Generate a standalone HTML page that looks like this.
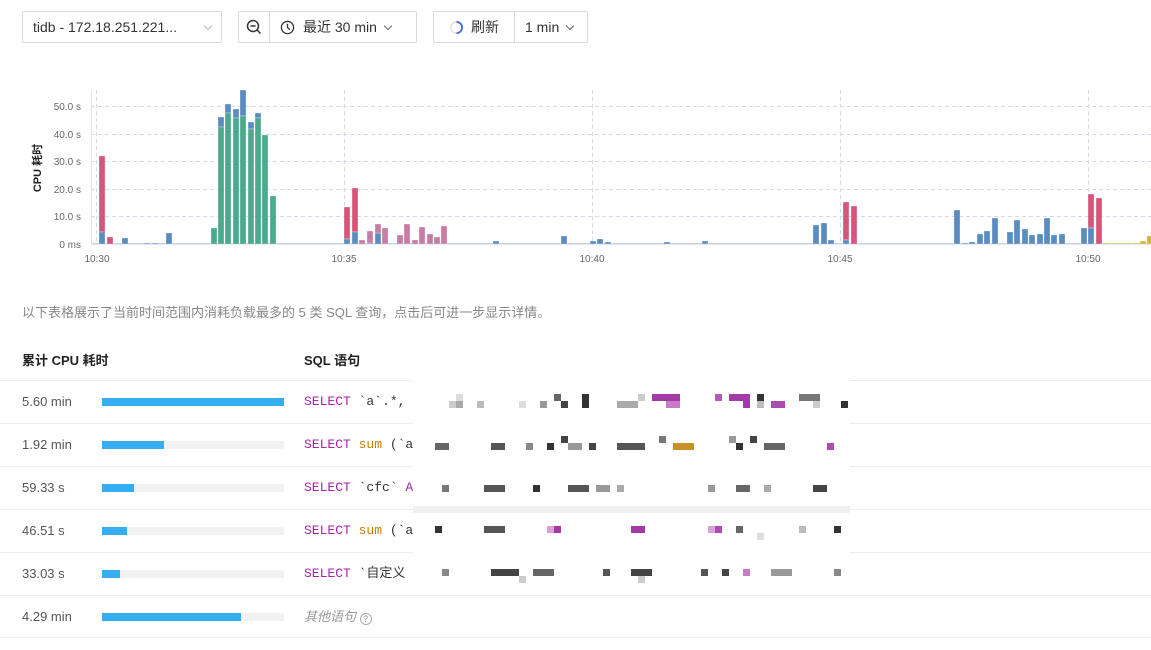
<!DOCTYPE html>
<html><head><meta charset="utf-8"><style>
*{box-sizing:border-box;margin:0;padding:0}
body{width:1151px;height:650px;background:#fff;font-family:"Liberation Sans","Noto Sans CJK SC",sans-serif;color:#333;position:relative;overflow:hidden}
.box{position:absolute;top:11px;height:32px;border:1px solid #d9d9d9;border-radius:2px;font-size:14px;color:#333;display:flex;align-items:center}
.seg{height:100%;display:flex;align-items:center;padding:0 10px}
.chev{width:6px;height:6px;border-right:1px solid #666;border-bottom:1px solid #666;transform:rotate(45deg);margin:-3px 0 0 8px}
.desc{position:absolute;left:22px;top:302px;font-size:13px;color:#888}
.th{position:absolute;top:350px;font-size:13px;color:#222;font-weight:bold}
.row{position:absolute;left:0;width:1151px;height:43px;border-top:1px solid #ececec}
.row .v{position:absolute;left:22px;top:13px;font-size:13px;line-height:16px;color:#555}
.row .bar{position:absolute;left:102px;top:17px;width:182px;height:8px;background:#f2f2f2}
.row .bar i{display:block;height:100%;background:#34aef0}
.row .sql{position:absolute;left:304px;top:13px;line-height:16px;height:16px;font-family:"Liberation Mono","Noto Sans CJK SC",monospace;font-size:13px;color:#333;white-space:nowrap}
.k{color:#a626a4}.f{color:#c18401}
.mask{position:absolute;left:413px;top:380px;width:437px;height:200px;background:#fff}
.mask b{position:absolute;width:7px;height:7px}
</style></head><body>
<div class="box" style="left:22px;width:200px"><div class="seg" style="width:100%;justify-content:space-between">tidb - 172.18.251.221...<span class="chev" style="border-color:#bbb"></span></div></div>
<div class="box" style="left:238px;width:179px">
 <div class="seg" style="width:31px;padding:0;justify-content:center;border-right:1px solid #d9d9d9"><svg width="16" height="16" viewBox="0 0 16 16"><circle cx="7" cy="7" r="5.5" fill="none" stroke="#333" stroke-width="1.5"/><path d="M4.5 7h5M11 11l3.5 3.5" stroke="#333" stroke-width="1.5"/></svg></div>
 <div class="seg"><svg width="15" height="15" viewBox="0 0 16 16" style="margin-right:8px"><circle cx="8" cy="8" r="6.5" fill="none" stroke="#333" stroke-width="1.4"/><path d="M8 4v4l2.5 2.5" fill="none" stroke="#333" stroke-width="1.4"/></svg>最近 30 min<span class="chev"></span></div>
</div>
<div class="box" style="left:433px;width:155px">
 <div class="seg" style="width:81px;padding-left:15px;border-right:1px solid #d9d9d9"><svg width="15" height="15" viewBox="0 0 16 16" style="margin-right:7px"><circle cx="8" cy="8" r="6" fill="none" stroke="#e6e6e6" stroke-width="2"/><path d="M8 2a6 6 0 0 1 0 12" fill="none" stroke="#4a6fd8" stroke-width="2"/></svg>刷新</div>
 <div class="seg">1 min<span class="chev"></span></div>
</div>

<svg style="position:absolute;left:0;top:80px" width="1151" height="190" viewBox="0 80 1151 190">
<g stroke="#d5d9e6" stroke-dasharray="4 3" stroke-width="1">
<line x1="91" x2="1151" y1="106.5" y2="106.5"/><line x1="91" x2="1151" y1="134.5" y2="134.5"/><line x1="91" x2="1151" y1="161.5" y2="161.5"/><line x1="91" x2="1151" y1="189.5" y2="189.5"/><line x1="91" x2="1151" y1="216.5" y2="216.5"/>
<line x1="96.5" x2="96.5" y1="90" y2="244"/><line x1="344.5" x2="344.5" y1="90" y2="244"/><line x1="592.5" x2="592.5" y1="90" y2="244"/><line x1="840.5" x2="840.5" y1="90" y2="244"/><line x1="1088.5" x2="1088.5" y1="90" y2="244"/>
</g>
<line x1="91.5" x2="91.5" y1="90" y2="245" stroke="#e3e3e3"/>
<line x1="91" x2="1151" y1="244.5" y2="244.5" stroke="#dde3ee"/>
<g font-size="10" fill="#666" text-anchor="end" font-family="Liberation Sans">
<text x="81" y="110">50.0 s</text><text x="81" y="138">40.0 s</text><text x="81" y="165">30.0 s</text><text x="81" y="193">20.0 s</text><text x="81" y="220">10.0 s</text><text x="81" y="248">0 ms</text></g>
<g font-size="10" fill="#666" text-anchor="middle"><text x="97" y="262">10:30</text><text x="344" y="262">10:35</text><text x="592" y="262">10:40</text><text x="840" y="262">10:45</text><text x="1088" y="262">10:50</text></g>
<text transform="translate(41,168) rotate(-90)" font-size="11" font-weight="bold" fill="#222" text-anchor="middle" font-family="Liberation Sans,Noto Sans CJK SC,sans-serif">CPU 耗时</text>
<g stroke="#fff" stroke-opacity=".5" stroke-width=".6">
<g fill="#a9c2de"><rect x="91" y="243" width="1060" height="1"/></g>
<g fill="#d4577b"><rect x="99" y="156" width="6" height="76"/><rect x="107" y="237" width="6" height="7"/><rect x="344" y="207" width="6" height="32"/><rect x="352" y="188" width="6" height="44"/><rect x="843" y="202" width="6" height="38"/><rect x="851" y="206" width="6" height="38"/><rect x="1088" y="194" width="6" height="34"/><rect x="1096" y="198" width="6" height="46"/></g>
<g fill="#5a8cc0"><rect x="99" y="232" width="6" height="12"/><rect x="122" y="238" width="6" height="6"/><rect x="166" y="233" width="6" height="11"/><rect x="144" y="243" width="6" height="1"/><rect x="152" y="243" width="6" height="1"/>
<rect x="218" y="117" width="6" height="10"/><rect x="225" y="104" width="6" height="9"/><rect x="233" y="109" width="6" height="9"/><rect x="240" y="90" width="6" height="26"/><rect x="248" y="122" width="6" height="7"/><rect x="255" y="113" width="6" height="5"/>
<rect x="344" y="239" width="6" height="5"/><rect x="352" y="232" width="6" height="12"/><rect x="367" y="243" width="6" height="1"/><rect x="375" y="233" width="6" height="11"/><rect x="493" y="241" width="6" height="3"/><rect x="561" y="236" width="6" height="8"/><rect x="590" y="241" width="6" height="3"/><rect x="597" y="239" width="6" height="5"/><rect x="605" y="242" width="6" height="2"/><rect x="702" y="241" width="6" height="3"/><rect x="664" y="242" width="6" height="2"/>
<rect x="813" y="225" width="6" height="19"/><rect x="821" y="223" width="6" height="21"/><rect x="828" y="240" width="6" height="4"/><rect x="843" y="240" width="6" height="4"/>
<rect x="954" y="210" width="6" height="34"/><rect x="962" y="243" width="6" height="1"/><rect x="969" y="242" width="6" height="2"/><rect x="977" y="234" width="6" height="10"/><rect x="984" y="231" width="6" height="13"/><rect x="992" y="218" width="6" height="26"/><rect x="1007" y="232" width="6" height="12"/><rect x="1014" y="220" width="6" height="24"/><rect x="1022" y="229" width="6" height="15"/><rect x="1029" y="235" width="6" height="9"/><rect x="1037" y="234" width="6" height="10"/><rect x="1044" y="218" width="6" height="26"/><rect x="1051" y="235" width="6" height="9"/><rect x="1059" y="234" width="6" height="10"/><rect x="1081" y="228" width="6" height="16"/><rect x="1088" y="228" width="6" height="16"/></g>
<g fill="#4aaa8b"><rect x="211" y="228" width="6" height="16"/><rect x="218" y="127" width="6" height="117"/><rect x="225" y="113" width="6" height="131"/><rect x="233" y="118" width="6" height="126"/><rect x="240" y="116" width="6" height="128"/><rect x="248" y="129" width="6" height="115"/><rect x="255" y="118" width="6" height="126"/><rect x="262" y="135" width="6" height="109"/><rect x="270" y="196" width="6" height="48"/></g>
<g fill="#c97ba4"><rect x="359" y="240" width="6" height="4"/><rect x="367" y="231" width="6" height="12"/><rect x="375" y="224" width="6" height="9"/><rect x="382" y="228" width="6" height="16"/><rect x="397" y="235" width="6" height="9"/><rect x="404" y="224" width="6" height="20"/><rect x="412" y="240" width="6" height="4"/><rect x="419" y="227" width="6" height="17"/><rect x="427" y="234" width="6" height="10"/><rect x="434" y="237" width="6" height="7"/><rect x="441" y="226" width="6" height="18"/></g>
<g fill="#d8b23f"><rect x="1103" y="243" width="6" height="1"/><rect x="1111" y="243" width="6" height="1"/><rect x="1118" y="243" width="6" height="1"/><rect x="1126" y="243" width="6" height="1"/><rect x="1133" y="243" width="6" height="1"/><rect x="1140" y="241" width="6" height="3"/><rect x="1147" y="236" width="6" height="8"/></g>
</g>
</svg>

<div class="desc">以下表格展示了当前时间范围内消耗负载最多的 5 类 SQL 查询，点击后可进一步显示详情。</div>
<div class="th" style="left:22px">累计 CPU 耗时</div>
<div class="th" style="left:304px">SQL 语句</div>

<div class="row" style="top:380px"><span class="v">5.60 min</span><div class="bar"><i style="width:100%"></i></div><span class="sql"><span class="k">SELECT</span> `a`.*, `</span></div>
<div class="row" style="top:423px"><span class="v">1.92 min</span><div class="bar"><i style="width:34%"></i></div><span class="sql"><span class="k">SELECT</span> <span class="f">sum</span> (`a`</span></div>
<div class="row" style="top:466px"><span class="v">59.33 s</span><div class="bar"><i style="width:17.5%"></i></div><span class="sql"><span class="k">SELECT</span> `cfc` <span class="k">AS</span></span></div>
<div class="row" style="top:509px"><span class="v">46.51 s</span><div class="bar"><i style="width:13.7%"></i></div><span class="sql"><span class="k">SELECT</span> <span class="f">sum</span> (`ac</span></div>
<div class="row" style="top:552px"><span class="v">33.03 s</span><div class="bar"><i style="width:10%"></i></div><span class="sql"><span class="k">SELECT</span> `自定义 <span class="k">s</span></span></div>
<div class="row" style="top:595px;border-bottom:1px solid #ececec"><span class="v">4.29 min</span><div class="bar"><i style="width:76.5%"></i></div><span class="sql" style="font-family:'Liberation Sans','Noto Sans CJK SC',sans-serif;font-style:italic;color:#999">其他语句 <span style="display:inline-block;width:12px;height:12px;border:1px solid #aaa;border-radius:50%;font-size:9px;text-align:center;line-height:11px;font-style:normal;vertical-align:-1px">?</span></span></div>

<div class="mask">
<div style="position:absolute;left:0;top:126px;width:437px;height:7px;background:#f0f0f0"></div>
<b style="left:36px;top:21px;background:#ccc"></b><b style="left:43px;top:14px;background:#ddd"></b><b style="left:43px;top:21px;background:#aaa"></b><b style="left:64px;top:21px;background:#bbb"></b><b style="left:106px;top:21px;background:#ddd"></b><b style="left:127px;top:21px;background:#999"></b><b style="left:141px;top:14px;background:#666"></b><b style="left:148px;top:21px;background:#444"></b><b style="left:169px;top:14px;width:7px;height:14px;background:#333"></b><b style="left:204px;top:21px;width:21px;background:#aaa"></b><b style="left:225px;top:14px;background:#ccc"></b><b style="left:239px;top:14px;width:28px;background:#a43aa6"></b><b style="left:253px;top:21px;width:14px;background:#c97bc9"></b><b style="left:302px;top:14px;background:#b65ab8"></b><b style="left:316px;top:14px;width:21px;background:#a43aa6"></b><b style="left:330px;top:21px;background:#a43aa6"></b><b style="left:344px;top:14px;background:#333"></b><b style="left:344px;top:21px;background:#bbb"></b><b style="left:358px;top:21px;width:14px;background:#b04ab2"></b><b style="left:386px;top:14px;width:21px;background:#777"></b><b style="left:400px;top:21px;background:#ccc"></b><b style="left:428px;top:21px;background:#333"></b>
<b style="left:22px;top:63px;width:14px;background:#666"></b><b style="left:78px;top:63px;width:14px;background:#555"></b><b style="left:113px;top:63px;background:#888"></b><b style="left:134px;top:63px;background:#333"></b><b style="left:148px;top:56px;background:#444"></b><b style="left:155px;top:63px;width:14px;background:#999"></b><b style="left:176px;top:63px;background:#444"></b><b style="left:204px;top:63px;width:28px;background:#555"></b><b style="left:246px;top:56px;background:#777"></b><b style="left:260px;top:63px;width:21px;background:#c8902a"></b><b style="left:316px;top:56px;background:#999"></b><b style="left:323px;top:63px;background:#333"></b><b style="left:337px;top:56px;background:#444"></b><b style="left:351px;top:63px;width:21px;background:#666"></b><b style="left:414px;top:63px;background:#b04ab2"></b>
<b style="left:29px;top:105px;background:#777"></b><b style="left:71px;top:105px;width:21px;background:#555"></b><b style="left:120px;top:105px;background:#333"></b><b style="left:155px;top:105px;width:21px;background:#555"></b><b style="left:183px;top:105px;width:14px;background:#999"></b><b style="left:204px;top:105px;background:#aaa"></b><b style="left:295px;top:105px;background:#999"></b><b style="left:323px;top:105px;width:14px;background:#666"></b><b style="left:351px;top:105px;background:#aaa"></b><b style="left:400px;top:105px;width:14px;background:#444"></b>
<b style="left:22px;top:146px;background:#333"></b><b style="left:71px;top:146px;width:21px;background:#555"></b><b style="left:134px;top:146px;background:#d9a0d9"></b><b style="left:141px;top:146px;background:#a43aa6"></b><b style="left:218px;top:146px;width:14px;background:#a43aa6"></b><b style="left:295px;top:146px;background:#d9a0d9"></b><b style="left:302px;top:146px;background:#b04ab2"></b><b style="left:323px;top:146px;background:#666"></b><b style="left:344px;top:153px;background:#ddd"></b><b style="left:386px;top:146px;background:#bbb"></b><b style="left:421px;top:146px;background:#333"></b>
<b style="left:29px;top:189px;background:#888"></b><b style="left:78px;top:189px;width:28px;background:#444"></b><b style="left:106px;top:196px;background:#ccc"></b><b style="left:120px;top:189px;width:21px;background:#666"></b><b style="left:190px;top:189px;background:#555"></b><b style="left:218px;top:189px;width:21px;background:#444"></b><b style="left:225px;top:196px;background:#ccc"></b><b style="left:288px;top:189px;background:#555"></b><b style="left:309px;top:189px;background:#444"></b><b style="left:330px;top:189px;background:#c57ec6"></b><b style="left:358px;top:189px;width:21px;background:#999"></b><b style="left:421px;top:189px;background:#888"></b>
</div>
</body></html>
